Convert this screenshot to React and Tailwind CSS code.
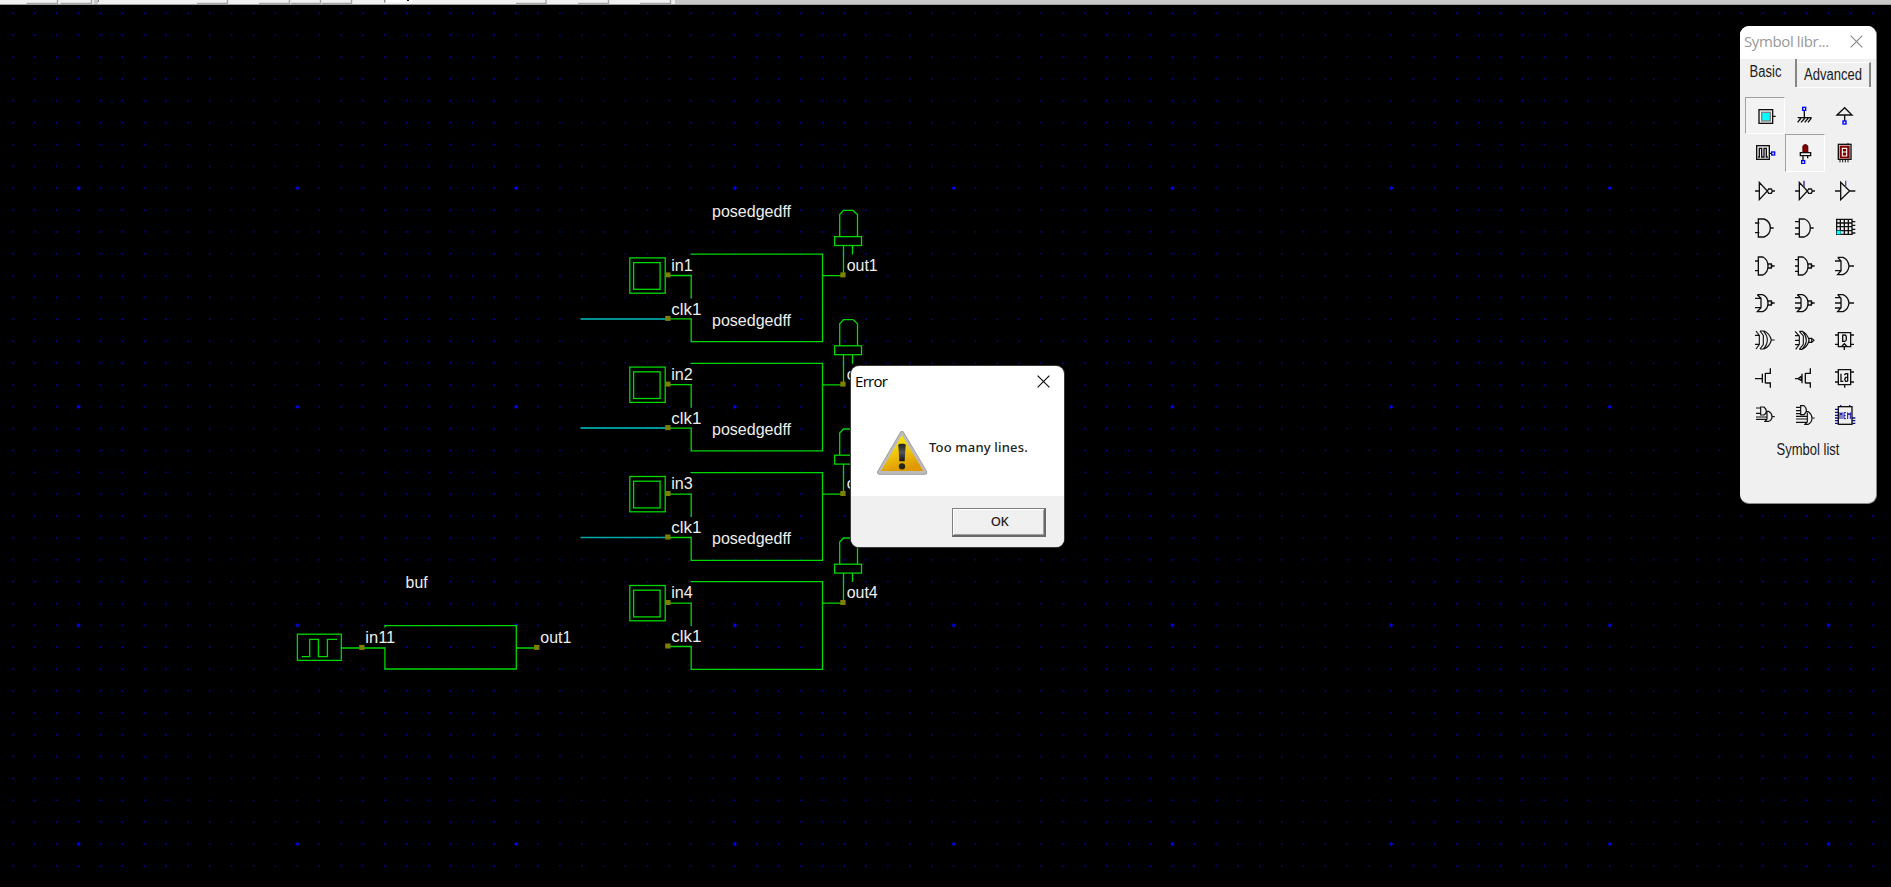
import React from "react";

const MINOR_COLS = Array.from({ length: 87 }, (_, i) => i - 3);
const MINOR_ROWS = Array.from({ length: 40 }, (_, i) => i - 8);

function Grid() {
  return (
    <g>
      {MINOR_ROWS.map((r) =>
        MINOR_COLS.map((c) => {
          const x = 78.6 + c * 21.875;
          const y = 188.2 + r * 21.86;
          if (y < 8) return null;
          if (r % 10 === 0 && c % 10 === 0) {
            return <path key={r + "_" + c} d={`M${x - 1.8} ${y}h3.6M${x} ${y - 1.8}v3.6`} stroke="#0000f0" strokeWidth="1.7" />;
          }
          return <rect key={r + "_" + c} x={x - 0.75} y={y - 0.75} width="1.5" height="1.5" fill="#0000b8" />;
        })
      )}
    </g>
  );
}

function Label({ x, y, w, deep, children }) {
  return (
    <g>
      <rect x={x} y={y - 14} width={w} height={deep ? 18 : 16.5} fill="#000" />
      <text x={x} y={y} fill="#eeeeee" fontSize="16" fontFamily="'Liberation Sans', Arial, sans-serif" textLength={w} lengthAdjust="spacingAndGlyphs">
        {children}
      </text>
    </g>
  );
}

function Pin({ x, y }) {
  return <rect x={x - 2.7} y={y - 2.5} width="5.3" height="5" fill="#808000" />;
}

function FlipFlop({ dy, n, wire }) {
  return (
    <g>
      <g transform={`translate(0 ${dy})`} fill="none" stroke="#00d800" strokeWidth="1.3">
        <path d="M690.6 254.1H822.5V341.7H691.2V318.9H668M668 275.5H691.2V298.5M822.5 275.6H843" />
        <rect x="629.8" y="257.9" width="35.4" height="35.3" />
        <rect x="633.6" y="262.6" width="26.5" height="26.7" />
        <path d="M839.7 236.5V214.5L843.5 210.4H853L857.5 214.5V236.5" />
        <rect x="834.6" y="236.6" width="26.9" height="8.9" />
        <path d="M843.5 245.5V273M852.5 245.5V254.5" />
        {wire && <path d="M580.5 318.9H667" stroke={wire} strokeWidth="1.5" />}
      </g>
      <Pin x={667.9} y={dy + 274.9} />
      <Pin x={667.9} y={dy + 318.4} />
      <Pin x={843} y={dy + 274.9} />
      <Label x={671.3} y={dy + 270.8} w={21.5}>{"in" + n}</Label>
      <Label x={671.3} y={dy + 314.6} w={30}>clk1</Label>
      <Label x={846.7} y={dy + 270.8} w={31}>{"out" + n}</Label>
      {wire && <Label x={712} y={dy + 325.8} w={79} deep>posedgedff</Label>}
    </g>
  );
}

function Schematic() {
  return (
    <svg className="block h-[887px] w-[1891px]" viewBox="0 0 1891 887">
      <Grid />
      <Label x={712} y={217} w={79} deep>posedgedff</Label>
      <FlipFlop dy={0} n={1} wire="#00c0c0" />
      <FlipFlop dy={109.2} n={2} wire="#00c8c8" />
      <FlipFlop dy={218.6} n={3} wire="#00a8a8" />
      <FlipFlop dy={327.6} n={4} />
      <Label x={405.6} y={588} w={22}>buf</Label>
      <g fill="none" stroke="#00d800" strokeWidth="1.3">
        <path d="M384.5 625.6H516.3V669H384.9V648H341.5M516.3 648H537M384.9 625.6V627.5" />
        <rect x="297.4" y="634.2" width="43.9" height="26.2" />
        <path d="M301.7 656.6H309.7V639.3H318.4V656.6H327.4V639.3H337" />
      </g>
      <Pin x={361.9} y={647.4} />
      <Pin x={536.8} y={647.4} />
      <Label x={365.3} y={643} w={30}>in11</Label>
      <Label x={540.3} y={643} w={31}>out1</Label>
    </svg>
  );
}

const AND_BODY = "M86 149H103Q122 156 122 176Q122 196 103 203H86Z";

const ICONS = [
  { v: "73 255 66 66", sunken: true, d: <><rect x="88" y="269" width="41" height="41" /><rect x="96" y="277" width="26" height="26" fill="#00ffff" stroke="#808080" /><path d="M130 289H138" /></> },
  { v: "193 255 66 66", d: <><path d="M224 271V292M204 293H246M214 294L204 307M226 294L214 307M236 294L225 307M245 294L235 307" /><rect x="219" y="262" width="9" height="9" stroke="#0000ff" /></> },
  { v: "313 255 66 66", d: <><path d="M345 303V285M322 285L345 263L367 285Z" /><rect x="340" y="303" width="9" height="9" stroke="#0000ff" /></> },
  { v: "73 367 66 66", d: <><rect x="81" y="378" width="38" height="41" /><path d="M85 412H89V386H96V412H103V386H110V412H115" /><path d="M119 401H125" /><rect x="126" y="397" width="9" height="9" stroke="#0000ff" /></> },
  { v: "193 367 66 66", sunken: true, d: <><path d="M220 398V380Q227 370 234 380V398Z" fill="#800000" stroke="#600000" /><path d="M212 399H243V408H212ZM220 408V422M234 408V416" /><rect x="216" y="423" width="9" height="9" stroke="#0000ff" fill="#efefef" /></> },
  { v: "313 367 66 66", d: <><rect x="326" y="374" width="38" height="45" /><rect x="332" y="380" width="26" height="34" fill="#800000" stroke="#800000" /><path d="M338 386H351V409H338ZM338 397H351" stroke="#fff" strokeWidth="3.4" /><path d="M331 420V428M339 420V428M347 420V428M355 420V428M355 370V375" strokeWidth="3" /></> },
  { v: "73 31 66 66", d: <path d="M76 64H89M89 38V90L113 64ZM128 64H136M113 64L117 58H125L128 64L125 71H117Z" /> },
  { v: "193 31 66 66", d: <><path d="M196 64H209M209 38V90L233 64ZM248 64H256M233 64L237 58H245L248 64L245 71H237Z" /><path d="M223 33V52" stroke="#2020a0" /></> },
  { v: "313 31 66 66", d: <><path d="M316 64H333M333 38V90L360 64ZM360 64H377" /><path d="M348 33V52" stroke="#5050b0" /></> },
  { v: "73 143 66 66", d: <path d={AND_BODY + "M76 161H89M76 190H89M122 176H132"} /> },
  { v: "193 143 66 66", d: <path d="M209 149H224Q242 156 242 176Q242 196 224 203H209ZM196 157H209M196 176H209M196 194H209M242 176H252" /> },
  { v: "313 143 66 66", d: <><path d="M321 150H367V195H321ZM332 150V195M344 150V195M356 150V195M321 161H367M321 172H367M321 184H367M367 157H377M367 168H377M367 180H377M367 191H377" /><rect x="321" y="184" width="12" height="11" fill="#00ffff" stroke="none" /></> },
  { v: "73 256 66 66", d: <path d="M86 262H100Q115 270 115 289Q115 308 100 316H86ZM76 274H86M76 303H86M115 283H125V295H115ZM125 284L128 289L125 294M128 289H135" /> },
  { v: "193 256 66 66", d: <path d="M206 262H220Q235 270 235 289Q235 308 220 316H206ZM196 270H206M196 289H206M196 305H206M235 283H245V295H235ZM245 284L248 289L245 294M248 289H255" /> },
  { v: "313 256 66 66", d: <path d="M324 263H340Q356 270 358 289Q356 308 340 315H324L334 303V274L324 263M316 274H334M316 303H334M358 289H373" /> },
  { v: "73 368 66 66", d: <path d="M83 376H99Q115 383 115 401Q115 420 99 427H83L94 415V387L83 376M76 387H93M76 415H93M115 395H125V407H115ZM125 396L128 401L125 406M128 401H135" /> },
  { v: "193 368 66 66", d: <path d="M203 376H219Q235 383 235 401Q235 420 219 427H203L214 415V387L203 376M196 385H213M196 401H213M196 416H213M235 395H245V407H235ZM245 396L248 401L245 406M248 401H255" /> },
  { v: "313 368 66 66", d: <path d="M324 376H340Q356 383 358 401Q356 420 340 427H324L334 415V387L324 376M316 385H334M316 401H334M316 416H334M358 401H373" /> },
  { v: "73 1 66 66", d: <path d="M79 7L89 20V48L79 61M91 7L101 20V48L91 61M91 7H103Q120 14 125 34Q120 54 103 61H91M102 8Q113 20 113 34T102 60M76 20H89M76 47H89M125 34H135" strokeWidth="3.4" /> },
  { v: "193 -3 66 66", d: <path d="M196 4L209 18V43L198 58M209 4L221 18V43L209 58M209 4H218Q234 12 238 31Q234 50 218 58H209M219 5Q230 18 230 31T218 57M196 17H209M196 31H209M196 44H209M238 25H246V37H238ZM247 26L253 31L247 36" strokeWidth="3.4" /> },
  { v: "313 -2 66 66", d: <path d="M326 9H363V51H326ZM316 16H326M316 44H326M363 16H373M363 44H373M338 16H346Q350 17 350 22V29Q350 34 345 35H339V17M335 51L344 42L353 51M344 51V61" /> },
  { v: "73 112 66 66", d: <path d="M76 147H97M98 132V159M107 130V161M107 131H122V116M107 160H122V174" /> },
  { v: "193 112 66 66", d: <path d="M196 147H205M217 132V161M227 130V161M227 131H242V116M227 160H242V174M215 140L205 147L215 153Z" /> },
  { v: "313 112 66 66", d: <path d="M326 120H363V165H326ZM316 127H326M316 157H326M363 127H373M363 157H373M334 132V155H341M344 136L348 132H354V155M354 143H348L345 149L348 155H354M345 165V174" /> },
  { v: "73 225 66 66", d: <path d="M93 234H103Q110 240 110 247Q110 254 103 258H93ZM79 237H93M79 253H93M79 264H111M79 271H111M111 247H117Q127 253 127 263Q127 273 117 277H106L112 270V250M127 263H135" strokeWidth="3.5" /> },
  { v: "193 225 66 66", d: <path d="M213 230H223Q230 236 230 244Q230 252 223 257H213ZM199 235H212M199 245H212M199 254H212M199 262H233M199 270H233M199 280H233M230 248H236Q247 257 247 267Q247 280 236 286H226L233 278V251M247 267H255" strokeWidth="3.5" /> },
  { v: "313 225 66 66", d: <><path d="M316 241H326M316 250H326M316 259H326M316 267H326M316 275H326M316 283H326M367 267H377M367 275H377M367 283H377M333 232V228M360 232V228" stroke="#1010a0" /><rect x="326" y="233" width="41" height="53" /><path d="M331 270V251L334 258L337 251V270M349 251H343V269H349M343 260H348M354 270V251L358 258L362 251V270" stroke="#1010a0" strokeWidth="3" /></> },
];

function SymbolLibrary() {
  return (
    <div className="absolute left-[1740px] top-[26px] flex h-[478px] w-[137px] flex-col overflow-hidden rounded-[9px] border-b border-r border-[#8a8a8a] bg-[#f0f0f0]">
      <div className="flex h-[33px] shrink-0 items-center justify-between bg-white pb-[2px] pl-1 pr-[13px]">
        <span className="whitespace-nowrap font-['Open_Sans',sans-serif] text-[15px] tracking-[-0.38px] text-[#999999]">Symbol libr...</span>
        <svg className="size-[13px]" viewBox="0 0 13 13" stroke="#858585" strokeWidth="1.1"><path d="M.7 .7L12.3 12.3M12.3 .7L.7 12.3" /></svg>
      </div>
      <div className="flex h-[38px] shrink-0 font-['Liberation_Sans',sans-serif] text-[13px] text-[#1a1a1a]">
        <div className="flex h-[28px] w-[57px] justify-center border-r-2 border-[#858585] pt-1 pr-1">
          <span className="scale-y-120">Basic</span>
        </div>
        <div className="mt-[3px] flex h-[25px] w-[74px] justify-center border-r-2 border-t border-r-[#858585] border-t-white pt-[2px] shadow-[0_1px_0_#fff]">
          <span className="scale-y-120">Advanced</span>
        </div>
      </div>
      <div className="ml-[5px] grid w-[120px] grid-cols-3">
        {ICONS.map((icon, i) => (
          <div
            key={i}
            className={
              icon.sunken
                ? "flex h-[37.46px] items-center justify-center border border-b-white border-l-[#a0a0a0] border-r-white border-t-[#a0a0a0] bg-[#f3f3f3]"
                : "flex h-[37.46px] items-center justify-center"
            }
          >
            <svg className="h-[22px] w-[22px]" viewBox={icon.v} fill="none" stroke="#101010" strokeWidth="4">{icon.d}</svg>
          </div>
        ))}
      </div>
      <div className="mt-[6px] flex justify-center font-['Liberation_Sans',sans-serif] text-[13px] text-[#1a1a1a]">
        <span className="scale-y-120">Symbol list</span>
      </div>
    </div>
  );
}

function ErrorDialog() {
  return (
    <div className="absolute left-[851px] top-[366px] flex h-[181px] w-[213px] flex-col overflow-hidden rounded-[8px] bg-white shadow-[0_0_0_1px_#3a3a3a]">
      <div className="flex h-[32px] items-center justify-between pb-[2px] pl-[4px] pr-[14px]">
        <span className="font-['Open_Sans',sans-serif] text-[15px] tracking-[-0.7px] text-black">Error</span>
        <svg className="size-[13px]" viewBox="0 0 13 13" stroke="#111" strokeWidth="1.2"><path d="M.6 .6L12.4 12.4M12.4 .6L.6 12.4" /></svg>
      </div>
      <div className="flex h-[98px] items-start pl-[25px] pt-[32px]">
        <svg className="h-[46px] w-[52px] shrink-0" viewBox="108 223 156 138">
          <defs>
            <linearGradient id="warnFill" x1="0" y1="0" x2="0.35" y2="1">
              <stop offset="0" stopColor="#fff200" />
              <stop offset="0.5" stopColor="#f0cc10" />
              <stop offset="1" stopColor="#e09a00" />
            </linearGradient>
            <linearGradient id="warnMark" x1="0" y1="0" x2="0" y2="1">
              <stop offset="0" stopColor="#222" />
              <stop offset="0.5" stopColor="#555" />
              <stop offset="1" stopColor="#111" />
            </linearGradient>
          </defs>
          <path d="M186 233L118 350H255Z" fill="#b4b4b4" stroke="#989898" strokeWidth="14" strokeLinejoin="round" />
          <path d="M186 233L118 350H255Z" fill="#b4b4b4" stroke="#bcbcbc" strokeWidth="9" strokeLinejoin="round" />
          <path d="M186 239L123 346H250Z" fill="url(#warnFill)" />
          <path d="M175 269Q175 264 180 264H192Q197 264 197 269L194 317H178Z" fill="url(#warnMark)" />
          <circle cx="186" cy="332" r="9.5" fill="#252510" />
        </svg>
        <span className="mt-[8px] whitespace-nowrap pl-px font-['Noto_Sans',sans-serif] text-[13px] font-medium leading-[18px] tracking-[0.17px] text-[#222]">Too many lines.</span>
      </div>
      <div className="flex flex-1 items-start justify-end bg-[#f0f0f0] pr-[18px] pt-[12px]">
        <button className="flex h-[29px] w-[94px] items-center justify-center border-b-2 border-l border-r-2 border-t border-b-[#696969] border-l-[#808080] border-r-[#696969] border-t-[#808080] bg-[#f0f0f0] pl-[2px] font-['Noto_Sans',sans-serif] text-[13px] font-medium tracking-[-0.4px] text-[#222] shadow-[inset_1px_1px_0_#fff,inset_-1px_-1px_0_#a0a0a0]">
          OK
        </button>
      </div>
    </div>
  );
}

function ToolbarEdge() {
  return (
    <div className="absolute left-0 top-0 w-full">
      <svg className="block h-[5px] w-full" viewBox="0 0 1891 5" preserveAspectRatio="none">
        <rect width="1891" height="5" fill="#c8c8c8" />
        <rect width="675" height="4" fill="#f0f0f0" />
        <path d="M26.5 3.5H57.5V0M60.5 3.5H91.5V0M197 3.5H227.5V0M259 3.5H289.5V0M291 3.5H320.5V0M322 3.5H351.5V0M516 3.5H546V0M578 3.5H608.5V0M640 3.5H670.5V0" stroke="#a6a6a6" strokeWidth="1.4" fill="none" />
        <rect x="94" width="4" height="4" fill="#c8c8c8" />
        <rect x="98" width="1" height="2" fill="#888" />
        <rect x="384" width="1.3" height="2.5" fill="#888" />
        <rect x="386" width="26" height="2.5" fill="#fff" />
        <rect x="407" width="2" height="1" fill="#111" />
        <rect y="4" width="1891" height="1" fill="#a0a0a0" />
      </svg>
    </div>
  );
}

export default function App() {
  return (
    <div className="relative h-[887px] w-[1891px] overflow-hidden bg-black">
      <Schematic />
      <ToolbarEdge />
      <SymbolLibrary />
      <ErrorDialog />
    </div>
  );
}
